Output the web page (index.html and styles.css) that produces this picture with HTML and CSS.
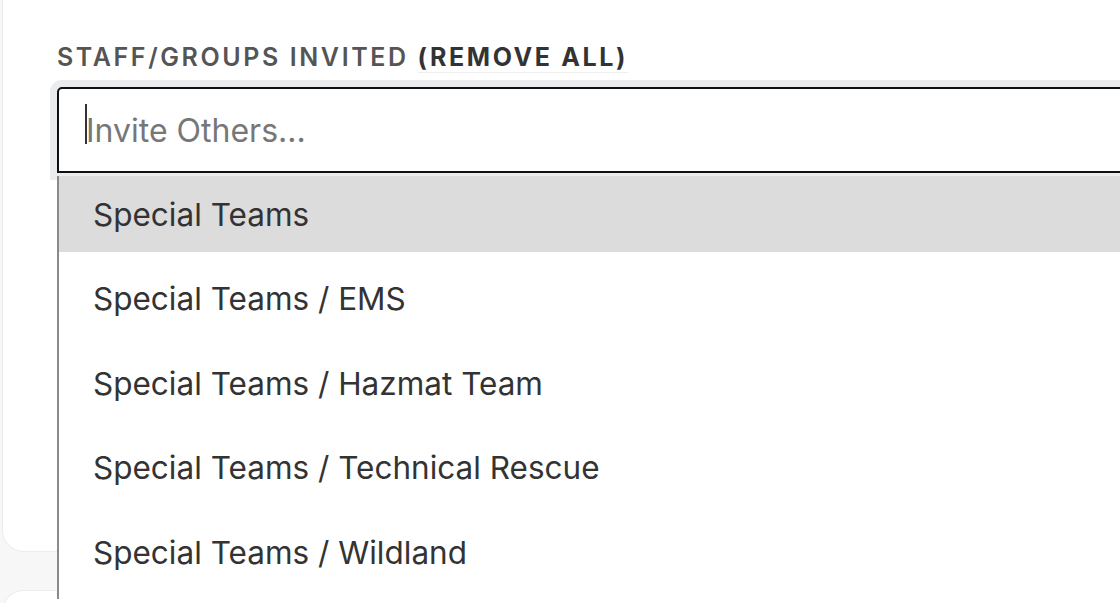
FILE: index.html
```html
<!DOCTYPE html>
<html lang="en">

<head>
  <meta charset="UTF-8">
  <title>Invite staff</title>
  <link rel="stylesheet" href="styles.css">
</head>

<body>
  <div class="card">
    <div class="field">
      <label class="field-label">Staff/Groups Invited <a class="remove-all" href="#">(Remove All)</a></label>
      <div class="picker">
        <div class="input-wrap">
          <span class="caret"></span>
          <input class="invite-input" type="text" placeholder="Invite Others...">
        </div>
        <ul class="dropdown">
          <li class="active">Special Teams</li>
          <li>Special Teams / EMS</li>
          <li>Special Teams / Hazmat Team</li>
          <li>Special Teams / Technical Rescue</li>
          <li>Special Teams / Wildland</li>
        </ul>
      </div>
    </div>
  </div>
  <div class="card card-next"></div>
</body>

</html>
```

FILE: styles.css
```css
body {
  font-family: 'Inter', 'Noto Sans', sans-serif;
  margin: 0;
  padding: 0;
  background-color: #f7f7f7;
  color: #333;
  width: 1120px;
  height: 603px;
  overflow: hidden;
}

.card {
  width: 1400px;
  height: 592px;
  margin: -40px 0 0 2px;
  background: #fff;
  border: 1px solid #ececec;
  border-radius: 22px;
  box-sizing: border-box;
  padding: 79px 0 0 54px;
}

.card-next {
  margin-top: 38px;
  height: 200px;
}

.field-label {
  display: block;
  font-size: 25px;
  font-weight: 600;
  line-height: 30px;
  letter-spacing: 2.6px;
  text-transform: uppercase;
  color: #555;
  margin: 2px 0 15px;
}

.remove-all {
  color: #333;
  font-weight: 700;
  text-decoration: none;
  border-bottom: 1px solid #efefef;
}

.picker {
  position: relative;
}

.input-wrap {
  position: relative;
  height: 86px;
  border: 2px solid #111;
  border-radius: 5px 0 0 0;
  box-sizing: border-box;
  box-shadow: 0 0 0 7px #ebecee;
  background: #fff;
}

.invite-input {
  width: 100%;
  height: 100%;
  box-sizing: border-box;
  border: 0;
  outline: none;
  padding: 0 0 0 27px;
  font-family: inherit;
  font-size: 32px;
  color: #333;
  background: transparent;
}

.invite-input::placeholder {
  color: #777;
}

.caret {
  position: absolute;
  left: 26px;
  top: 15px;
  width: 2px;
  height: 40px;
  background: #333;
}

.dropdown {
  position: absolute;
  top: 89px;
  left: 0;
  right: 0;
  margin: 0;
  padding: 0;
  list-style: none;
  background: #fff;
  border-left: 2px solid #8a8a8a;
  z-index: 2;
}

.dropdown li {
  height: 76px;
  margin-bottom: 8.5px;
  padding-left: 34px;
  display: flex;
  align-items: center;
  font-size: 31.5px;
  color: #333;
}

.dropdown li.active {
  background: #dcdcdc;
}
```
